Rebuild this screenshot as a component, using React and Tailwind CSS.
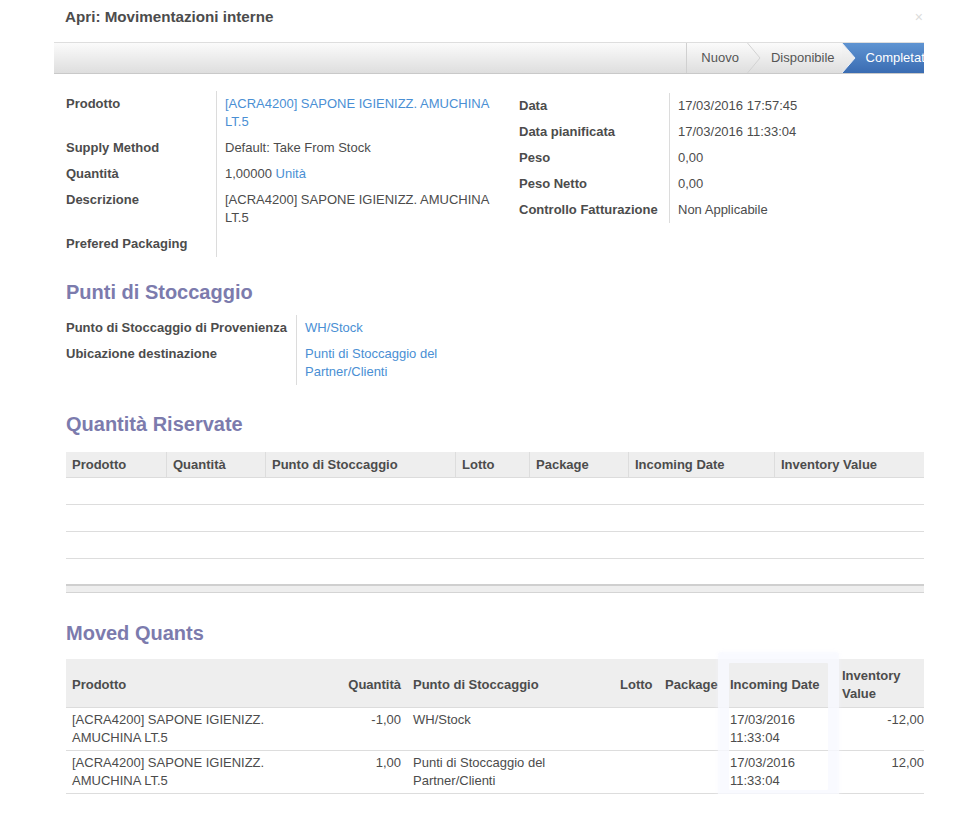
import React from "react";

const Lbl = ({ children, w }) => (
  <div className={`${w} shrink-0 py-[4px] pr-[6px] font-bold text-[#4c4c4c]`}>{children}</div>
);

const Val = ({ children }) => (
  <div className="flex-1 border-l border-[#dcdcdc] py-[4px] pl-[8px] text-[#4c4c4c]">{children}</div>
);

const Row = ({ label, w, children }) => (
  <div className="flex">
    <Lbl w={w}>{label}</Lbl>
    <Val>{children}</Val>
  </div>
);

const Link = ({ children }) => <span className="text-[#4a8fd4]">{children}</span>;

const Heading = ({ children, cls }) => (
  <div className={`text-[20px] leading-[28px] font-bold text-[#7c7bad] ${cls}`}>{children}</div>
);

const t1cols = [
  ["Prodotto", "w-[100px]"],
  ["Quantità", "w-[99px]"],
  ["Punto di Stoccaggio", "w-[190px]"],
  ["Lotto", "w-[74px]"],
  ["Package", "w-[99px]"],
  ["Incoming Date", "w-[146px]"],
  ["Inventory Value", "w-[150px]"],
];

const moved = [
  {
    prod: ["[ACRA4200] SAPONE IGIENIZZ.", "AMUCHINA LT.5"],
    qty: "-1,00",
    loc: ["WH/Stock"],
    date: ["17/03/2016", "11:33:04"],
    val: "-12,00",
  },
  {
    prod: ["[ACRA4200] SAPONE IGIENIZZ.", "AMUCHINA LT.5"],
    qty: "1,00",
    loc: ["Punti di Stoccaggio del", "Partner/Clienti"],
    date: ["17/03/2016", "11:33:04"],
    val: "12,00",
  },
];

const Lines = ({ l }) => l.map((x, i) => <div key={i}>{x}</div>);

export default function App() {
  return (
    <div className="w-[978px] h-[813px] overflow-hidden bg-white font-['Liberation_Sans',Arial,sans-serif] text-[13px] leading-[18px] text-[#4c4c4c]">
      <div className="w-[924px] overflow-hidden">
        {/* header */}
        <div className="h-[42px] pt-[8px] pl-[65px] flex justify-between">
          <div className="text-[15.2px] font-bold text-[#4c4c4c]">Apri: Movimentazioni interne</div>
          <div className="text-[14px] leading-[18px] text-[#dcdcdc] pr-[1px]">×</div>
        </div>

        {/* status bar */}
        <div className="ml-[54px] w-[898px] h-[32px] flex justify-end border-t border-b border-t-[#dedede] border-b-[#c9c9c9] bg-linear-to-b from-[#fbfbfb] to-[#dedede]">
          <div className="flex items-center border-l border-[#d0d0d0] pl-[14px] pr-[8px] text-[#555]">Nuovo</div>
          <svg width="14" height="30" className="shrink-0">
            <polyline points="0.5,0 13,15 0.5,30" fill="none" stroke="#d2d2d2" strokeWidth="1" />
          </svg>
          <div className="flex items-center pl-[10px] pr-[7px] text-[#555]">Disponibile</div>
          <div className="relative flex items-center bg-linear-to-b from-[#5f94d2] to-[#3a6cb2] pl-[24px] pr-[20px] text-white whitespace-nowrap">
            <svg width="14" height="30" className="absolute left-0 top-0">
              <defs>
                <linearGradient id="g" x1="0" y1="0" x2="0" y2="1">
                  <stop offset="0" stopColor="#f8f8f8" />
                  <stop offset="1" stopColor="#e0e0e0" />
                </linearGradient>
              </defs>
              <polygon points="0,0 13,15 0,30" fill="url(#g)" />
              <polyline points="0,0 13,15 0,30" fill="none" stroke="#e8eef7" strokeWidth="1" />
            </svg>
            Completato
          </div>
        </div>

        {/* form */}
        <div className="ml-[66px] w-[858px]">
          <div className="flex mt-[17px]">
            <div className="w-[440px] mr-[13px]">
              <Row label="Prodotto" w="w-[150px]">
                <Link>
                  [ACRA4200] SAPONE IGIENIZZ. AMUCHINA
                  <br />
                  LT.5
                </Link>
              </Row>
              <Row label="Supply Method" w="w-[150px]">Default: Take From Stock</Row>
              <Row label="Quantità" w="w-[150px]">
                1,00000 <Link>Unità</Link>
              </Row>
              <Row label="Descrizione" w="w-[150px]">
                [ACRA4200] SAPONE IGIENIZZ. AMUCHINA
                <br />
                LT.5
              </Row>
              <Row label="Prefered Packaging" w="w-[150px]">&nbsp;</Row>
            </div>
            <div className="flex-1 pt-[2px]">
              <Row label="Data" w="w-[150px]">17/03/2016 17:57:45</Row>
              <Row label="Data pianificata" w="w-[150px]">17/03/2016 11:33:04</Row>
              <Row label="Peso" w="w-[150px]">0,00</Row>
              <Row label="Peso Netto" w="w-[150px]">0,00</Row>
              <Row label="Controllo Fatturazione" w="w-[150px]">Non Applicabile</Row>
            </div>
          </div>

          <Heading cls="mt-[21px]">Punti di Stoccaggio</Heading>
          <div className="w-[440px] mt-[9px]">
            <Row label="Punto di Stoccaggio di Provenienza" w="w-[230px]">
              <Link>WH/Stock</Link>
            </Row>
            <Row label="Ubicazione destinazione" w="w-[230px]">
              <Link>
                Punti di Stoccaggio del
                <br />
                Partner/Clienti
              </Link>
            </Row>
          </div>

          <Heading cls="mt-[25px]">Quantità Riservate</Heading>
          <div className="mt-[14px]">
            <div className="flex h-[26px] bg-[#eeeeee] border-b border-[#dcdcdc]">
              {t1cols.map(([n, w], i) => (
                <div
                  key={n}
                  className={`${w} flex items-center pl-[6px] font-bold text-[#4c4c4c] ${i > 0 ? "border-l border-[#dddddd]" : ""}`}
                >
                  {n}
                </div>
              ))}
            </div>
            <div className="h-[27px] border-b border-[#dddddd]" />
            <div className="h-[27px] border-b border-[#dddddd]" />
            <div className="h-[27px] border-b border-[#dddddd]" />
            <div className="h-[25px]" />
            <div className="h-[9px] border-t-2 border-[#cfcfcf] bg-[#eeeeee] border-b border-b-[#d4d4d4]" />
          </div>

          <Heading cls="mt-[26px]">Moved Quants</Heading>
          <div className="relative mt-[12px]">
            <div className="flex h-[49px] pt-[4px] items-center bg-[#eeeeee] border-b border-[#dcdcdc] font-bold text-[#4c4c4c]">
              <div className="w-[275px] pl-[6px]">Prodotto</div>
              <div className="w-[66px] pr-[6px] text-right">Quantità</div>
              <div className="w-[207px] pl-[6px]">Punto di Stoccaggio</div>
              <div className="w-[45px] pl-[6px]">Lotto</div>
              <div className="w-[65px] pl-[6px]">Package</div>
              <div className="w-[112px] pl-[6px]">Incoming Date</div>
              <div className="w-[88px] pl-[6px]">
                Inventory
                <br />
                Value
              </div>
            </div>
            {moved.map((r, i) => (
              <div key={i} className="flex border-b border-[#dddddd] pt-[3px] pb-[3px] text-[#4c4c4c]">
                <div className="w-[275px] pl-[6px]">
                  <Lines l={r.prod} />
                </div>
                <div className="w-[66px] pr-[6px] text-right">{r.qty}</div>
                <div className="w-[207px] pl-[6px]">
                  <Lines l={r.loc} />
                </div>
                <div className="w-[45px]" />
                <div className="w-[65px]" />
                <div className="w-[112px] pl-[6px]">
                  <Lines l={r.date} />
                </div>
                <div className="w-[88px] text-right">{r.val}</div>
              </div>
            ))}
            <div className="absolute left-[663px] top-[4px] w-[99px] h-[127px] rounded-[1px] shadow-[0_0_0_11px_rgba(248,249,255,0.72),0_0_4px_12px_rgba(245,246,255,0.35)]" />
          </div>
        </div>
      </div>
    </div>
  );
}
